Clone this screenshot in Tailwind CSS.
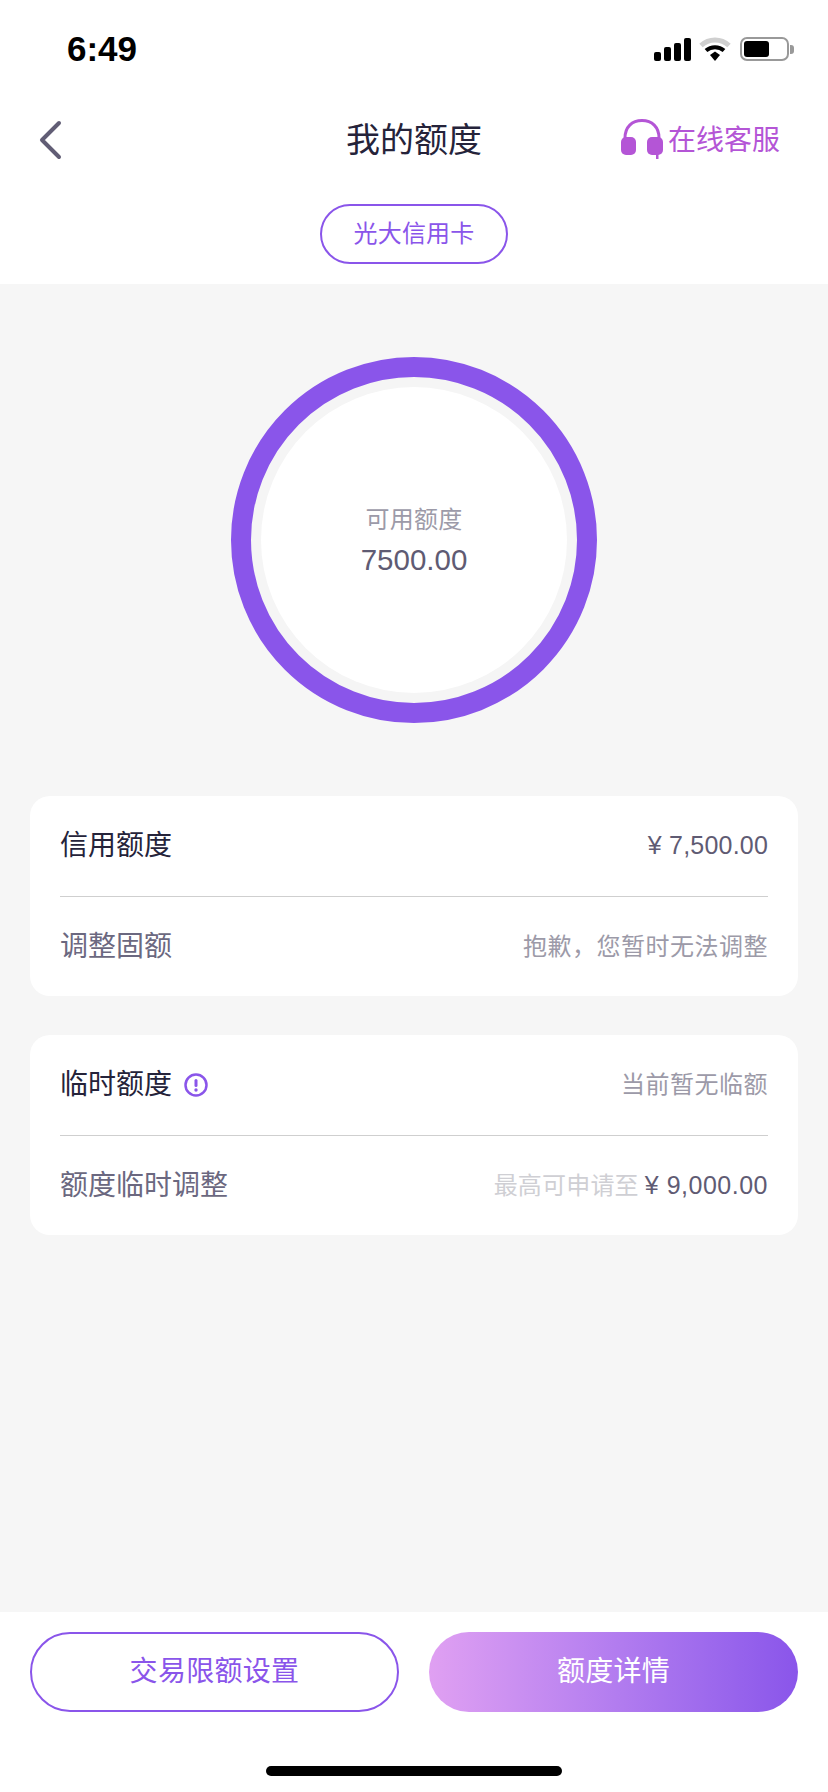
<!DOCTYPE html>
<html lang="zh-CN">

<head>
  <meta charset="UTF-8">
  <meta name="viewport" content="width=device-width, initial-scale=1.0">
  <title>我的额度</title>
  <script src="https://cdn.jsdelivr.net/npm/@tailwindcss/browser@4"></script>
</head>

<body class="bg-white font-['Liberation_Sans','Noto_Sans_CJK_SC',sans-serif]">
  <div class="w-[828px] h-[1792px] flex flex-col overflow-hidden">

    <!-- status bar -->
    <div class="h-[100px] shrink-0 flex items-start justify-between pt-[29px] pl-[67px] pr-[34px]">
      <span class="text-[35px] leading-[40px] font-bold text-black">6:49</span>
      <div class="flex items-center gap-[10px] h-[24px] mt-[8px]">
        <div class="flex items-end gap-[3px] h-[23px] mr-[-2px]">
          <div class="w-[7px] h-[9px] rounded-[2px] bg-black"></div>
          <div class="w-[7px] h-[14px] rounded-[2px] bg-black"></div>
          <div class="w-[7px] h-[18px] rounded-[2px] bg-black"></div>
          <div class="w-[7px] h-[23px] rounded-[2px] bg-black"></div>
        </div>
        <svg width="32" height="24" viewBox="0 0 32 24">
          <path d="M2 8.5C10 1 22 1 30 8.5" fill="none" stroke="#cfcfcf" stroke-width="5" />
          <path d="M7 13.5C12 9 20 9 25 13.5" fill="none" stroke="#000" stroke-width="4" />
          <path d="M11 18L16 14.5L21 18L16 24Z" fill="#000" />
        </svg>
        <div class="flex items-center">
          <div class="w-[49px] h-[24px] rounded-[7px] border-2 border-[#999] p-[2px] ml-[-1px]">
            <div class="w-[25px] h-full rounded-[3px] bg-black"></div>
          </div>
          <div class="w-[4px] h-[9px] rounded-r-[3px] bg-[#999] ml-[1px]"></div>
        </div>
      </div>
    </div>

    <!-- nav -->
    <div class="h-[80px] shrink-0 relative flex items-center justify-center">
      <svg class="absolute left-[38px] top-[20px]" width="24" height="40" viewBox="0 0 24 40">
        <path d="M21 3L4 20L21 37" fill="none" stroke="#615d75" stroke-width="4" stroke-linecap="round" stroke-linejoin="round" />
      </svg>
      <h1 class="text-[34px] leading-[48px] font-normal text-[#25233a]">我的额度</h1>
      <div class="absolute right-[48px] top-[19px] flex items-start gap-[5px]">
        <svg width="42" height="40" viewBox="0 0 42 40">
          <path d="M4 22V19C4 8 11 1.500 21 1.500S38 8 38 19V22" fill="none" stroke="#b455d6" stroke-width="3" />
          <rect x="0" y="18" width="15" height="18" rx="5" fill="#b455d6" />
          <rect x="26" y="18" width="16" height="18" rx="5" fill="#b455d6" />
          <rect x="35" y="35" width="2.500" height="5" fill="#b455d6" />
        </svg>
        <span class="text-[28px] leading-[40px] mt-[2px] text-[#b455d6]">在线客服</span>
      </div>
    </div>

    <!-- card picker -->
    <div class="h-[104px] shrink-0 flex justify-center pt-[24px]">
      <button class="w-[188px] h-[60px] rounded-full border-2 border-[#8a55ea] text-[24px] tracking-[0.2px] text-[#8a55ea]">光大信用卡</button>
    </div>

    <!-- content -->
    <div class="flex-1 bg-[#f6f6f6] flex flex-col px-[30px]">
      <div class="flex justify-center pt-[73px]">
        <div class="w-[366px] h-[366px] rounded-full border-[20px] border-[#8a55ea] bg-[#f5f5f5] p-[10px]">
          <div class="w-full h-full rounded-full bg-white flex flex-col items-center justify-center pt-[3px]">
            <span class="text-[24px] leading-[34px] tracking-[0.3px] text-[#9c9aa8]">可用额度</span>
            <span class="text-[29.500px] leading-[40px] mt-[3px] text-[#5f5b73]">7500.00</span>
          </div>
        </div>
      </div>

      <div class="mt-[73px] h-[200px] bg-white rounded-[20px] px-[30px] flex flex-col">
        <div class="h-[101px] flex items-center justify-between border-b border-[#cfcfcf]">
          <span class="text-[28px] text-[#25233a]">信用额度</span>
          <span class="text-[25px] tracking-[0.2px] text-[#5f5b73]">¥ 7,500.00</span>
        </div>
        <div class="flex-1 flex items-center justify-between">
          <span class="text-[28px] text-[#6b6880]">调整固额</span>
          <span class="text-[24px] tracking-[0.5px] text-[#9c9aa8]">抱歉，您暂时无法调整</span>
        </div>
      </div>

      <div class="mt-[39px] h-[200px] bg-white rounded-[20px] px-[30px] flex flex-col">
        <div class="h-[101px] flex items-center justify-between border-b border-[#cfcfcf]">
          <div class="flex items-center gap-[12px]">
            <span class="text-[28px] text-[#25233a]">临时额度</span>
            <svg width="24" height="24" viewBox="0 0 24 24">
              <circle cx="12" cy="12" r="10.500" fill="none" stroke="#8a55ea" stroke-width="2.500" />
              <rect x="10.500" y="6" width="3" height="8" rx="1.500" fill="#8a55ea" />
              <circle cx="12" cy="17" r="1.700" fill="#8a55ea" />
            </svg>
          </div>
          <span class="text-[24px] tracking-[0.5px] text-[#9c9aa8]">当前暂无临额</span>
        </div>
        <div class="flex-1 flex items-center justify-between">
          <span class="text-[28px] text-[#6b6880]">额度临时调整</span>
          <div class="flex items-center gap-[6px]">
            <span class="text-[24px] tracking-[0.2px] text-[#cfcfd4]">最高可申请至</span>
            <span class="text-[25px] tracking-[0.5px] text-[#5f5b73]">¥ 9,000.00</span>
          </div>
        </div>
      </div>
    </div>

    <!-- bottom actions -->
    <div class="h-[180px] shrink-0 bg-white px-[30px] pt-[20px] flex flex-col">
      <div class="flex justify-between">
        <button class="w-[369px] h-[80px] rounded-full border-2 border-[#8a55ea] text-[28px] tracking-[0.3px] text-[#8a55ea]">交易限额设置</button>
        <button class="w-[369px] h-[80px] rounded-full bg-linear-to-r from-[#e0a0f2] to-[#8a55ea] text-[28px] tracking-[0.3px] text-white">额度详情</button>
      </div>
      <div class="w-[296px] h-[10px] rounded-full bg-black mx-auto mt-[54px]"></div>
    </div>
  </div>
</body>

</html>
